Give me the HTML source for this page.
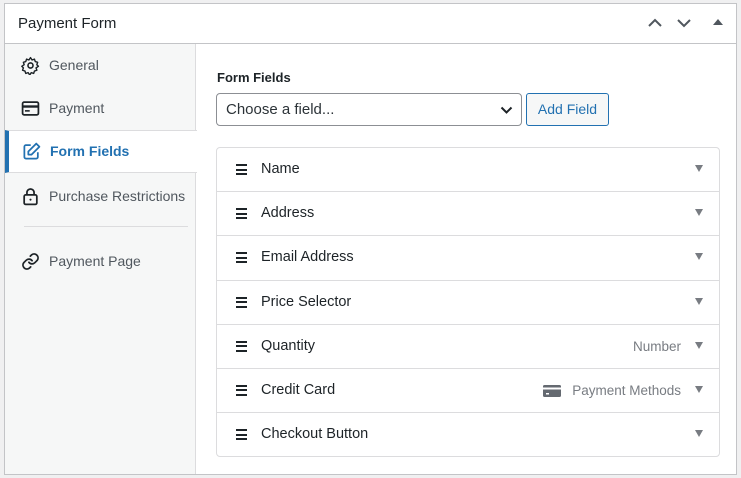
<!DOCTYPE html>
<html><head><style>
*{box-sizing:border-box;margin:0;padding:0}
body{width:741px;height:478px;background:#f0f0f1;font-family:"Liberation Sans",sans-serif;position:relative;overflow:hidden;color:#1d2327}
.panel{position:absolute;left:4px;top:3px;width:733px;height:472px;background:#fff;border:1px solid #c3c4c7}
.hdr{height:40px;border-bottom:1px solid #c3c4c7;position:relative}
.hdr h2{position:absolute;left:13px;top:11px;font-size:15px;font-weight:normal;color:#1d2327}
.side{position:absolute;left:0;top:40px;width:191px;bottom:0;background:#f6f7f7;border-right:1px solid #dcdcde}
.it{position:absolute;left:0;width:191px;height:43px;font-size:14px;color:#50575e;display:flex;align-items:center;padding-left:16px;padding-bottom:1px}
.it svg{margin-right:9px}
.act{background:#fff;border-top:1px solid #dcdcde;border-bottom:1px solid #dcdcde;width:192px;color:#2271b1;font-weight:bold;border-left:4px solid #2271b1;padding-left:13px}
.lbl{position:absolute;left:212px;top:66px;font-size:13px;font-weight:bold}
.sel{position:absolute;left:211px;top:89px;width:306px;height:33px;border:1px solid #8c8f94;border-radius:4px;font-size:15px;padding:7px 9px;color:#2c3338}
.btn{position:absolute;left:521px;top:89px;width:83px;height:33px;border:1px solid #2271b1;border-radius:3px;background:#f6f7f7;color:#2271b1;font-size:14px;text-align:center;line-height:31px}
.list{position:absolute;left:211px;top:143px;width:504px;height:310px;border:1px solid #dcdcde;border-radius:4px}
.row{height:44.2px;border-bottom:1px solid #dcdcde;position:relative;font-size:14.5px;color:#1d2327}
.row:last-child{border-bottom:none}
.row .n{position:absolute;left:44px;top:13px}
.row .h{position:absolute;left:19px;top:16px;width:11px;height:11px;border-top:2px solid #1d2327;border-bottom:2px solid #1d2327}
.row .h:after{content:"";position:absolute;left:0;right:0;top:2.5px;height:2px;background:#1d2327}
.row .t{position:absolute;right:16px;top:17px;width:0;height:0;border-left:4.5px solid transparent;border-right:4.5px solid transparent;border-top:7px solid #787c82}
.row .m{position:absolute;right:38px;top:14px;font-size:13.5px;color:#787c82}
</style></head><body>
<div class="panel">
<div class="hdr"><h2>Payment Form</h2>
<svg style="position:absolute;left:642px;top:13px" width="16" height="12"><path d="M2 9 L8 3 L14 9" stroke="#50575e" stroke-width="2" fill="none"/></svg>
<svg style="position:absolute;left:671px;top:13px" width="16" height="12"><path d="M2 3 L8 9 L14 3" stroke="#50575e" stroke-width="2" fill="none"/></svg>
<svg style="position:absolute;left:708px;top:14px" width="10" height="8"><path d="M0 7 L5 1 L10 7Z" fill="#50575e"/></svg>
</div>
<div class="side">
<div class="it" style="top:0"><svg width="19" height="19" viewBox="0 0 24 24"><circle cx="12" cy="12" r="3.2" fill="none" stroke="#1d2327" stroke-width="2"/><path d="M12 2l2 3 3-1 1 3 3 1-1 3 2 2-3 2 1 3-3 1-1 3-3-1-2 3-2-3-3 1-1-3-3-1 1-3-2-2 3-2-1-3 3-1 1-3 3 1z" fill="none" stroke="#1d2327" stroke-width="1.8" stroke-linejoin="round"/></svg>General</div>
<div class="it" style="top:43px"><svg width="19" height="19" viewBox="0 0 24 24"><rect x="2" y="4" width="20" height="16" rx="2" fill="none" stroke="#1d2327" stroke-width="2.2"/><rect x="2" y="8" width="20" height="3" fill="#1d2327"/><rect x="5" y="14" width="6" height="2" fill="#1d2327"/></svg>Payment</div>
<div class="it act" style="top:86px"><svg width="19" height="19" viewBox="0 0 24 24"><path d="M11 4H5a2 2 0 0 0-2 2v13a2 2 0 0 0 2 2h13a2 2 0 0 0 2-2v-6" fill="none" stroke="#2271b1" stroke-width="2.2"/><path d="M18 2l4 4-10 10H8v-4z" fill="none" stroke="#2271b1" stroke-width="2.2" stroke-linejoin="round"/></svg>Form Fields</div>
<div class="it" style="top:131px"><svg width="19" height="19" viewBox="0 0 24 24"><rect x="4" y="10" width="16" height="12" rx="2" fill="none" stroke="#1d2327" stroke-width="2.2"/><path d="M7.5 10V7a4.5 4.5 0 0 1 9 0v3" fill="none" stroke="#1d2327" stroke-width="2.2"/><circle cx="12" cy="16" r="1.3" fill="#1d2327"/></svg>Purchase Restrictions</div>
<div style="position:absolute;left:19px;top:182px;width:164px;height:1px;background:#dcdcde"></div>
<div class="it" style="top:196px"><svg width="19" height="19" viewBox="0 0 24 24"><path d="M10 13a5 5 0 0 0 7.5.5l3-3a5 5 0 0 0-7-7l-1.7 1.7M14 11a5 5 0 0 0-7.5-.5l-3 3a5 5 0 0 0 7 7l1.7-1.7" fill="none" stroke="#1d2327" stroke-width="2.2" stroke-linecap="round"/></svg>Payment Page</div>
</div>
<div class="lbl">Form Fields</div>
<div class="sel">Choose a field...<svg style="position:absolute;right:8px;top:12px" width="13" height="9"><path d="M1.5 1.5 L6.5 6.5 L11.5 1.5" stroke="#1d2327" stroke-width="2" fill="none"/></svg></div>
<div class="btn">Add Field</div>
<div class="list">
<div class="row"><span class="h"></span><span class="n">Name</span><span class="t"></span></div>
<div class="row"><span class="h"></span><span class="n">Address</span><span class="t"></span></div>
<div class="row"><span class="h"></span><span class="n">Email Address</span><span class="t"></span></div>
<div class="row"><span class="h"></span><span class="n">Price Selector</span><span class="t"></span></div>
<div class="row"><span class="h"></span><span class="n">Quantity</span><span class="m">Number</span><span class="t"></span></div>
<div class="row"><span class="h"></span><span class="n">Credit Card</span><span class="m"><svg style="vertical-align:-3px;margin-right:11px" width="18" height="14" viewBox="0 0 18 14"><rect x="0" y="1" width="18" height="12" rx="1.5" fill="#646970"/><rect x="0" y="3.5" width="18" height="2" fill="#fff"/><rect x="3" y="9" width="3" height="1.5" fill="#fff"/></svg>Payment Methods</span><span class="t"></span></div>
<div class="row"><span class="h"></span><span class="n">Checkout Button</span><span class="t"></span></div>
</div>
</div>
</body></html>
